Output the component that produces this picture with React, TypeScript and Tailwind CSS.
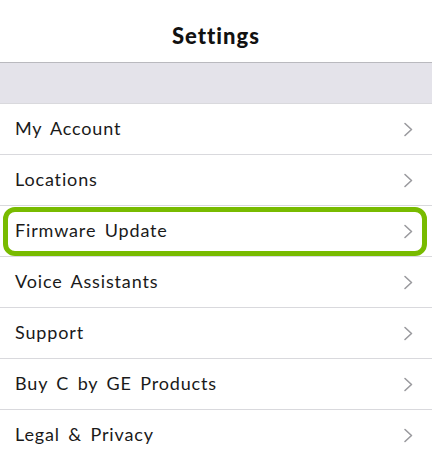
const items = [
  'My Account',
  'Locations',
  'Firmware Update',
  'Voice Assistants',
  'Support',
  'Buy C by GE Products',
  'Legal & Privacy',
];

function Chevron() {
  return (
    <svg width="11" height="15" viewBox="0 0 11 15" fill="none" className="shrink-0">
      <path d="M2 1.5 L8.5 7.5 L2 13.5" stroke="#9a9a9e" strokeWidth="1.6" strokeLinecap="round" strokeLinejoin="round" />
    </svg>
  );
}

export default function App() {
  return (
    <div className="w-[432px] h-[461px] overflow-hidden bg-white" style={{ fontFamily: 'Lato, "Open Sans", sans-serif' }}>
      <header className="h-[63px] flex items-center justify-center border-b border-[#b9b9be] bg-white">
        <h1 className="text-[22px] font-black text-[#111] tracking-[1px] pt-[9px]">Settings</h1>
      </header>

      <div className="h-[40px] bg-[#e4e3ea]" />

      <ul>
        {items.map((label) => (
          <li
            key={label}
            className="relative h-[51px] border-t border-[#d9d9dd] flex items-center justify-between pl-[15px] pr-[18px] bg-white"
          >
            <span className="text-[18px] text-[#1a1a1a] tracking-[0.85px] [word-spacing:3px] -mt-[1px]">{label}</span>
            <Chevron />
            {label === 'Firmware Update' && (
              <div className="absolute left-[3px] right-[5px] top-[1px] bottom-0 border-[5px] border-[#78bb00] rounded-[12px]" />
            )}
          </li>
        ))}
      </ul>
    </div>
  );
}
